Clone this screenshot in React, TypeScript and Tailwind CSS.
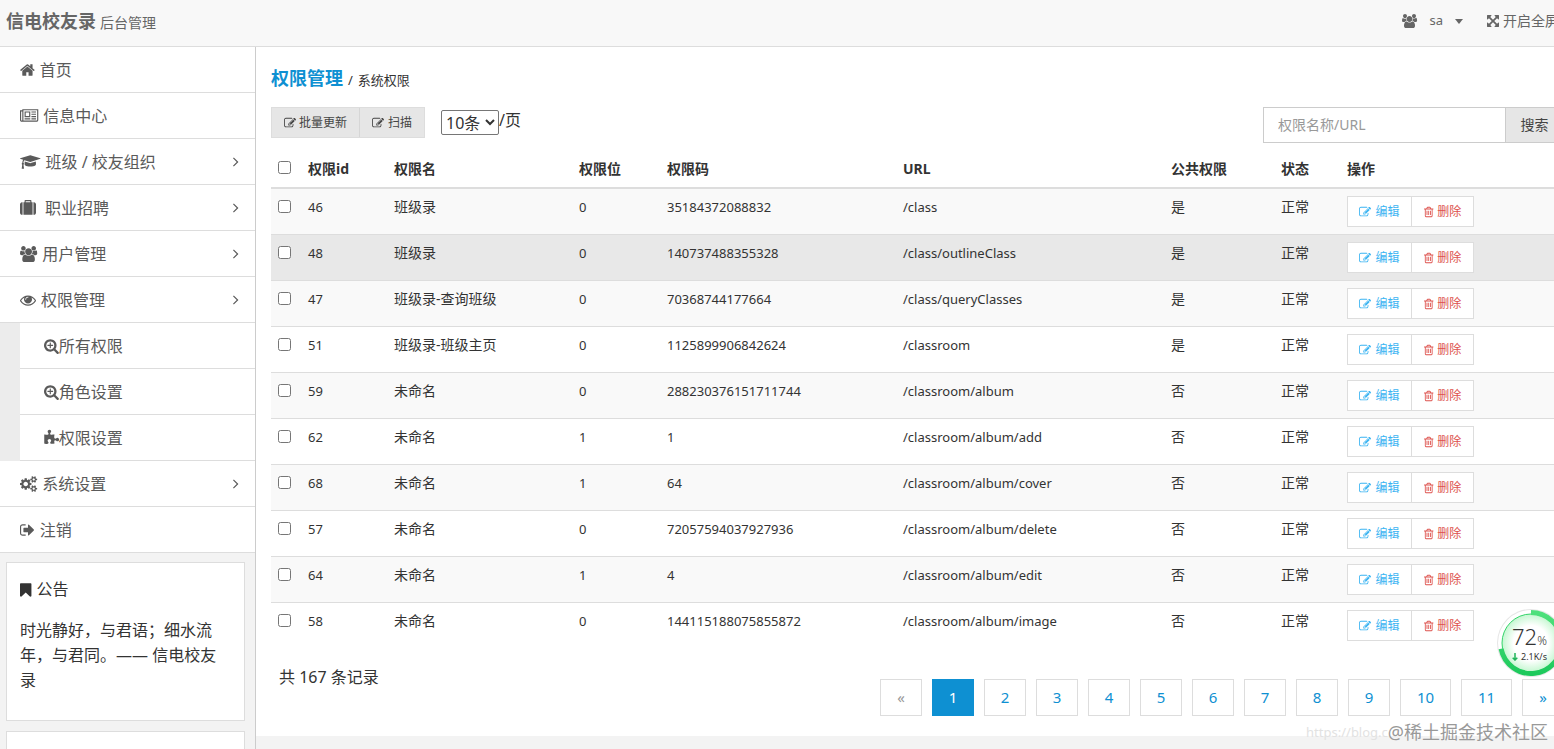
import { useState } from "react";
import type React from "react";

const ICONS = {
  home: {
    box: "64 0 1664 1792",
    d: "M1472 992v480q0 26-19 45t-45 19h-384v-384h-256v384h-384q-26 0-45-19t-19-45v-480q0-1 .5-3t.5-3l575-474 575 474q1 2 1 6zm223-69l-62 74q-8 9-21 11h-3q-13 0-21-7l-692-577-692 577q-12 8-24 7-13-2-21-11l-62-74q-8-10-7-23.5t11-21.5l719-599q32-26 76-26t76 26l244 204v-195q0-14 9-23t23-9h192q14 0 23 9t9 23v408l219 182q10 8 11 21.5t-7 23.5z",
  },
  news: {
    box: "0 0 2048 1792",
    d: "M1024 512h-384v384h384v-384zm128 640v128h-640v-128h640zm0-768v640h-640v-640h640zm640 768v128h-512v-128h512zm0-256v128h-512v-128h512zm0-256v128h-512v-128h512zm0-256v128h-512v-128h512zm-1536 960v-960h-128v960q0 26 19 45t45 19 45-19 19-45zm1664 0v-1088h-1536v1088q0 33-11 64h1483q26 0 45-19t19-45zm128-1216v1216q0 80-56 136t-136 56h-1664q-80 0-136-56t-56-136v-1088h256v-128h1792z",
  },
  graduation: {
    box: "0 0 2304 1792",
    d: "M1774 836l18 316q4 69-82 128t-235 93.5-323 34.5-323-34.5-235-93.5-82-128l18-316 574 181q22 7 48 7t48-7zm530-324q0 23-22 31l-1120 352q-4 1-10 1t-10-1l-652-206q-43 34-71 111.5t-34 178.5q63 36 63 109 0 69-58 107l58 433q2 14-8 25-9 11-24 11h-192q-15 0-24-11-10-11-8-25l58-433q-58-38-58-107 0-73 65-111 11-207 98-330l-333-104q-22-8-22-31t22-31l1120-352q4-1 10-1t10 1l1120 352q22 8 22 31z",
  },
  suitcase: {
    box: "0 0 1792 1792",
    d: "M640 256h512v-128h-512v128zm-352 0v1408h-64q-92 0-158-66t-66-158v-960q0-92 66-158t158-66h64zm1120 0v1408h-1024v-1408h128v-160q0-40 28-68t68-28h576q40 0 68 28t28 68v160h128zm384 224v960q0 92-66 158t-158 66h-64v-1408h64q92 0 158 66t66 158z",
  },
  users: {
    box: "0 0 1920 1792",
    d: "M593 896q-162 5-265 128h-134q-82 0-138-40.5t-56-118.5q0-353 124-353 6 0 43.5 21t97.5 42.5 119 21.5q67 0 133-23-5 37-5 66 0 159 81 256zm1071 637q0 120-73 189.5t-194 69.5h-874q-121 0-194-69.5t-73-189.5q0-53 3.5-103.5t14-109 26.5-108.5 43-97.5 62-81 85.5-53.5 111.5-20q10 0 43 21.5t73 48 107 48 135 21.5 135-21.5 107-48 73-48 43-21.5q61 0 111.5 20t85.5 53.5 62 81 43 97.5 26.5 108.5 14 109 3.5 103.5zm-1024-1277q0 106-75 181t-181 75-181-75-75-181 75-181 181-75 181 75 75 181zm704 384q0 159-112.5 271.5t-271.5 112.5-271.5-112.5-112.5-271.5 112.5-271.5 271.5-112.5 271.5 112.5 112.5 271.5zm576 225q0 78-56 118.5t-138 40.5h-134q-103-123-265-128 93-134 93-293 0-29-5-66 66 23 133 23 59 0 119-21.5t97.5-42.5 43.5-21q124 0 124 353zm-128-609q0 106-75 181t-181 75-181-75-75-181 75-181 181-75 181 75 75 181z",
  },
  eye: {
    box: "0 0 1792 1792",
    d: "M1664 960q-152-236-381-353 61 104 61 225 0 185-131.5 316.5t-316.5 131.5-316.5-131.5-131.5-316.5q0-121 61-225-229 117-381 353 133 205 333.5 326.5t434.5 121.5 434.5-121.5 333.5-326.5zm-720-384q0-20-14-34t-34-14q-125 0-214.5 89.5t-89.5 214.5q0 20 14 34t34 14 34-14 14-34q0-86 61-147t147-61q20 0 34-14t14-34zm848 384q0 34-20 69-140 230-376.5 368.5t-499.5 138.5-499.5-139-376.5-368q-20-35-20-69t20-69q140-229 376.5-368t499.5-139 499.5 139 376.5 368q20 35 20 69z",
  },
  searchPlus: {
    box: "64 0 1664 1792",
    d: "M1088 800v64q0 13-9.5 22.5t-22.5 9.5h-224v224q0 13-9.5 22.5t-22.5 9.5h-64q-13 0-22.5-9.5t-9.5-22.5v-224h-224q-13 0-22.5-9.5t-9.5-22.5v-64q0-13 9.5-22.5t22.5-9.5h224v-224q0-13 9.5-22.5t22.5-9.5h64q13 0 22.5 9.5t9.5 22.5v224h224q13 0 22.5 9.5t9.5 22.5zm128 32q0-185-131.5-316.5t-316.5-131.5-316.5 131.5-131.5 316.5 131.5 316.5 316.5 131.5 316.5-131.5 131.5-316.5zm512 832q0 53-37.5 90.5t-90.5 37.5q-54 0-90-38l-343-342q-179 124-399 124-143 0-273.5-55.5t-225-150-150-225-55.5-273.5 55.5-273.5 150-225 225-150 273.5-55.5 273.5 55.5 225 150 150 225 55.5 273.5q0 220-124 399l343 343q37 37 37 90z",
  },
  puzzle: {
    box: "64 0 1664 1792",
    d: "M1755 1083q0 81-44.5 135t-123.5 54q-41 0-77.5-17.5t-59-38-56.5-38-71-17.5q-110 0-110 124 0 39 16 115t15 115v5q-22 0-33 1-34 3-97.5 11.5t-115.5 13.5-98 5q-61 0-103-26.5t-42-83.5q0-37 17.5-71t38-56.5 38-59 17.5-77.5q0-79-54-123.5t-135-44.5q-84 0-143 45.5t-59 127.5q0 43 15 83t33.5 64.5 33.5 53 15 50.5q0 45-46 89-37 35-117 35-95 0-245-24-9-2-27.5-4t-27.5-4l-13-2q-1 0-3-1-2 0-2-1v-1024q2 1 17.5 3.5t34 5 21.5 3.5q150 24 245 24 80 0 117-35 46-44 46-89 0-22-15-50.5t-33.5-53-33.5-64.5-15-83q0-82 59-127.5t144-45.5q80 0 134 44.5t54 123.5q0 41-17.5 77.5t-38 59-38 56.5-17.5 71q0 57 42 83.5t103 26.5q64 0 180-15t163-17v2q-1 2-3.5 17.5t-5 34-3.5 21.5q-24 150-24 245 0 80 35 117 44 46 89 46 22 0 50.5-15t53-33.5 64.5-33.5 83-15q82 0 127.5 59t45.5 143z",
  },
  cogs: {
    box: "0 0 1920 1792",
    d: "M896 896q0-106-75-181t-181-75-181 75-75 181 75 181 181 75 181-75 75-181zm768 512q0-52-38-90t-90-38-90 38-38 90q0 53 37.5 90.5t90.5 37.5 90.5-37.5 37.5-90.5zm0-1024q0-52-38-90t-90-38-90 38-38 90q0 53 37.5 90.5t90.5 37.5 90.5-37.5 37.5-90.5zm-384 421v185q0 10-7 19.5t-16 10.5l-155 24q-11 35-32 76 34 48 90 115 7 11 7 20 0 12-7 19-23 30-82.5 89.5t-78.5 59.5q-11 0-21-7l-115-90q-37 19-77 31-11 108-23 155-7 24-30 24h-186q-11 0-20-7.5t-10-17.5l-23-153q-34-10-75-31l-118 89q-7 7-20 7-11 0-21-8-144-133-144-160 0-9 7-19 10-14 41-53t47-61q-23-44-35-82l-152-24q-10-1-17-9.5t-7-19.5v-185q0-10 7-19.5t16-10.5l155-24q11-35 32-76-34-48-90-115-7-11-7-20 0-12 7-20 22-30 82-89t79-59q11 0 21 7l115 90q34-18 77-32 11-108 23-154 7-24 30-24h186q11 0 20 7.5t10 17.5l23 153q34 10 75 31l118-89q8-7 20-7 11 0 21 8 144 133 144 160 0 8-7 19-12 16-42 54t-45 60q23 48 34 82l152 23q10 2 17 10.5t7 19.5zm640 533v140q0 16-149 31-12 27-30 52 51 113 51 138 0 4-4 7-122 71-124 71-8 0-46-47t-52-68q-20 2-30 2t-30-2q-14 21-52 68t-46 47q-2 0-124-71-4-3-4-7 0-25 51-138-18-25-30-52-149-15-149-31v-140q0-16 149-31 13-29 30-52-51-113-51-138 0-4 4-7 4-2 35-20t59-34 30-16q8 0 46 46.5t52 67.5q20-2 30-2t30 2q51-71 92-112l6-2q4 0 124 70 4 3 4 7 0 25-51 138 17 23 30 52 149 15 149 31zm0-1024v140q0 16-149 31-12 27-30 52 51 113 51 138 0 4-4 7-122 71-124 71-8 0-46-47t-52-68q-20 2-30 2t-30-2q-14 21-52 68t-46 47q-2 0-124-71-4-3-4-7 0-25 51-138-18-25-30-52-149-15-149-31v-140q0-16 149-31 13-29 30-52-51-113-51-138 0-4 4-7 4-2 35-20t59-34 30-16q8 0 46 46.5t52 67.5q20-2 30-2t30 2q51-71 92-112l6-2q4 0 124 70 4 3 4 7 0 25-51 138 17 23 30 52 149 15 149 31z",
  },
  signOut: {
    box: "64 0 1664 1792",
    d: "M704 1440q0 4 1 20t.5 26.5-3 23.5-10 19.5-20.5 6.5h-320q-119 0-203.5-84.5t-84.5-203.5v-704q0-119 84.5-203.5t203.5-84.5h320q13 0 22.5 9.5t9.5 22.5q0 4 1 20t.5 26.5-3 23.5-10 19.5-20.5 6.5h-320q-66 0-113 47t-47 113v704q0 66 47 113t113 47h312l11.5 1 11.5 3 8 5.5 7 9 2 13.5zm928-544q0 26-19 45l-544 544q-19 19-45 19t-45-19-19-45v-288h-448q-26 0-45-19t-19-45v-384q0-26 19-45t45-19h448v-288q0-26 19-45t45-19 45 19l544 544q19 19 19 45z",
  },
  bookmark: {
    box: "256 0 1280 1792",
    d: "M1420 128q23 0 44 9 33 13 52.5 41t19.5 62v1289q0 34-19.5 62t-52.5 41q-19 8-44 8-48 0-83-32l-441-424-441 424q-36 33-83 33-23 0-44-9-33-13-52.5-41t-19.5-62v-1289q0-34 19.5-62t52.5-41q21-9 44-9h1048z",
  },
  edit: {
    box: "0 0 1792 1792",
    d: "M888 1184l116-116-152-152-116 116v56h96v96h56zm440-720q-16-16-33 1l-350 350q-17 17-1 33t33-1l350-350q17-17 1-33zm80 594v190q0 119-84.5 203.5t-203.5 84.5h-832q-119 0-203.5-84.5t-84.5-203.5v-832q0-119 84.5-203.5t203.5-84.5h832q63 0 117 25 15 7 18 23 3 17-9 29l-49 49q-14 14-32 8-23-6-45-6h-832q-66 0-113 47t-47 113v832q0 66 47 113t113 47h832q66 0 113-47t47-113v-126q0-13 9-22l64-64q15-15 35-7t20 29zm-96-738l288 288-672 672h-288v-288zm444 132l-92 92-288-288 92-92q28-28 68-28t68 28l152 152q28 28 28 68t-28 68z",
  },
  trash: {
    box: "192 0 1408 1792",
    d: "M704 736v576q0 14-9 23t-23 9h-64q-14 0-23-9t-9-23v-576q0-14 9-23t23-9h64q14 0 23 9t9 23zm256 0v576q0 14-9 23t-23 9h-64q-14 0-23-9t-9-23v-576q0-14 9-23t23-9h64q14 0 23 9t9 23zm256 0v576q0 14-9 23t-23 9h-64q-14 0-23-9t-9-23v-576q0-14 9-23t23-9h64q14 0 23 9t9 23zm128 724v-948h-896v948q0 22 7 40.5t14.5 27 10.5 8.5h832q3 0 10.5-8.5t14.5-27 7-40.5zm-672-1076h448l-48-117q-7-9-17-11h-317q-10 2-17 11zm928 32v64q0 14-9 23t-23 9h-96v948q0 83-47 143.5t-113 60.5h-832q-66 0-113-58.5t-47-141.5v-952h-96q-14 0-23-9t-9-23v-64q0-14 9-23t23-9h309l70-167q15-37 54-63t79-26h320q40 0 79 26t54 63l70 167h309q14 0 23 9t9 23z",
  },
  arrows: {
    box: "128 0 1536 1792",
    d: "M1411 541l-355 355 355 355 144-144q29-31 70-14 39 17 39 59v448q0 26-19 45t-45 19h-448q-42 0-59-40-17-39 14-69l144-144-355-355-355 355 144 144q31 30 14 69-17 40-59 40h-448q-26 0-45-19t-19-45v-448q0-42 40-59 39-17 69 14l144 144 355-355-355-355-144 144q-19 19-45 19-12 0-24-5-40-17-40-59v-448q0-26 19-45t45-19h448q42 0 59 40 17 39-14 69l-144 144 355 355 355-355-144-144q-31-30-14-69 17-40 59-40h448q26 0 45 19t19 45v448q0 42-39 59-13 5-25 5-26 0-45-19z",
  },
  angleRight: {
    box: "576 64 640 1792",
    d: "M1171 960q0 13-10 23l-466 466q-10 10-23 10t-23-10l-50-50q-10-10-10-23t10-23l393-393-393-393q-10-10-10-23t10-23l50-50q10-10 23-10t23 10l466 466q10 10 10 23z",
  },
};

type IconName = keyof typeof ICONS;

const Icon = ({ name, className = "" }: { name: IconName; className?: string }) => (
  <svg
    viewBox={ICONS[name].box}
    fill="currentColor"
    aria-hidden="true"
    className={`h-[1em] w-auto shrink-0 overflow-visible ${className}`}
  >
    <path d={ICONS[name].d} />
  </svg>
);

const menu: { icon: IconName; label: string; arrow?: boolean; wide?: boolean; children?: { icon: IconName; label: string }[] }[] = [
  { icon: "home", label: "首页" },
  { icon: "news", label: "信息中心" },
  { icon: "graduation", label: "班级 / 校友组织", arrow: true },
  { icon: "suitcase", label: "职业招聘", arrow: true, wide: true },
  { icon: "users", label: "用户管理", arrow: true },
  {
    icon: "eye",
    label: "权限管理",
    arrow: true,
    children: [
      { icon: "searchPlus", label: "所有权限" },
      { icon: "searchPlus", label: "角色设置" },
      { icon: "puzzle", label: "权限设置" },
    ],
  },
  { icon: "cogs", label: "系统设置", arrow: true },
  { icon: "signOut", label: "注销" },
];

const rows = [
  { id: 46, name: "班级录", pos: 0, code: "35184372088832", url: "/class", open: "是" },
  { id: 48, name: "班级录", pos: 0, code: "140737488355328", url: "/class/outlineClass", open: "是" },
  { id: 47, name: "班级录-查询班级", pos: 0, code: "70368744177664", url: "/class/queryClasses", open: "是" },
  { id: 51, name: "班级录-班级主页", pos: 0, code: "1125899906842624", url: "/classroom", open: "是" },
  { id: 59, name: "未命名", pos: 0, code: "288230376151711744", url: "/classroom/album", open: "否" },
  { id: 62, name: "未命名", pos: 1, code: "1", url: "/classroom/album/add", open: "否" },
  { id: 68, name: "未命名", pos: 1, code: "64", url: "/classroom/album/cover", open: "否" },
  { id: 57, name: "未命名", pos: 0, code: "72057594037927936", url: "/classroom/album/delete", open: "否" },
  { id: 64, name: "未命名", pos: 1, code: "4", url: "/classroom/album/edit", open: "否" },
  { id: 58, name: "未命名", pos: 0, code: "144115188075855872", url: "/classroom/album/image", open: "否" },
];

const pages = ["«", "1", "2", "3", "4", "5", "6", "7", "8", "9", "10", "11", "»"];

const Header = () => (
  <header className="flex h-[47px] items-center justify-between border-b border-[#ddd] bg-[#f8f8f8] pb-1 pl-[6px] text-[#666]">
    <div className="flex items-baseline gap-1">
      <strong className="text-lg font-bold">信电校友录</strong>
      <small className="text-sm">后台管理</small>
    </div>
    <nav className="flex items-center gap-6 pr-5">
      <a href="#user" className="flex items-center text-[13px]">
        <Icon name="users" className="mr-3 text-sm" />
        sa
        <span className="ml-3 border-x-[4px] border-t-[5px] border-x-transparent border-t-current" />
      </a>
      <a href="#fullscreen" className="flex items-center gap-1 text-sm">
        <Icon name="arrows" />
        开启全屏
      </a>
    </nav>
  </header>
);

const Sidebar = () => (
  <aside className="w-64 shrink-0 border-r border-[#ccc] bg-[#f3f3f3]">
    <ul className="bg-[#ececec] text-base text-[#5a5a5a]">
      {menu.map((item) => (
        <li key={item.label}>
          <a
            href="#menu"
            className={`flex h-[46px] items-center border-b border-[#ddd] bg-white pr-4 pl-5 ${item.wide ? "gap-[9px]" : "gap-[5px]"}`}
          >
            <Icon name={item.icon} />
            <span>{item.label}</span>
            {item.arrow && <Icon name="angleRight" className="ml-auto" />}
          </a>
          {item.children && (
            <ul className="pl-5">
              {item.children.map((child) => (
                <li key={child.label}>
                  <a href="#menu" className="flex h-[46px] items-center border-b border-[#ddd] bg-white pl-6">
                    <Icon name={child.icon} />
                    {child.label}
                  </a>
                </li>
              ))}
            </ul>
          )}
        </li>
      ))}
    </ul>

    <section className="mt-[9px] mr-[10px] ml-[6px] border border-[#ddd] bg-white px-[13px] pt-[14px] pb-[27px] text-base leading-[25px] text-[#333]">
      <h2 className="flex items-center gap-[5px]">
        <Icon name="bookmark" />
        公告
      </h2>
      <p className="mt-4 pr-3">时光静好，与君语；细水流年，与君同。—— 信电校友录</p>
    </section>
    <section className="mt-[10px] mr-[10px] ml-[6px] h-40 border border-[#ddd] bg-white" />
  </aside>
);

const Toolbar = () => {
  const [keyword, setKeyword] = useState("");

  const handleSearch = (e: React.FormEvent<HTMLFormElement>) => {
    e.preventDefault();
  };

  return (
    <div className="mt-[13px] flex items-start">
      <div className="flex h-[31px] border border-[#ddd] bg-[#e6e6e6] text-xs text-[#444]">
        <button type="button" className="flex items-center gap-[3px] border-r border-[#d6d6d6] px-3">
          <Icon name="edit" />
          批量更新
        </button>
        <button type="button" className="flex items-center gap-1 px-3">
          <Icon name="edit" />
          扫描
        </button>
      </div>

      <label className="mt-[3px] ml-4 flex items-start text-base leading-5 text-[#333]">
        <select
          defaultValue="10"
          className="h-[25px] w-[58px] rounded-[2px] border border-[#767676] bg-white text-base text-[#333]"
        >
          <option value="10">10条</option>
          <option value="20">20条</option>
        </select>
        /页
      </label>

      <form onSubmit={handleSearch} className="ml-auto flex h-9 text-sm">
        <input
          type="text"
          aria-label="权限名称/URL"
          placeholder="权限名称/URL"
          value={keyword}
          onChange={(e) => setKeyword(e.target.value)}
          className="w-[242px] border border-r-0 border-[#ccc] px-[14px] placeholder:text-[#999] focus:outline-none"
        />
        <button type="submit" className="w-[59px] border border-[#ccc] bg-[#e6e6e6] text-[#444]">
          搜索
        </button>
      </form>
    </div>
  );
};

const PermissionTable = () => (
  <table className="mt-2 w-full table-fixed border-separate border-spacing-0 text-left text-sm leading-[22px] text-[#333]">
    <colgroup>
      <col className="w-[30px]" />
      <col className="w-[86px]" />
      <col className="w-[185px]" />
      <col className="w-[88px]" />
      <col className="w-[236px]" />
      <col />
      <col className="w-[110px]" />
      <col className="w-[66px]" />
      <col className="w-[224px]" />
    </colgroup>
    <thead>
      <tr className="[&>th]:border-b-2 [&>th]:border-[#ddd] [&>th]:p-[7px] [&>th]:font-bold">
        <th>
          <input type="checkbox" aria-label="全选" className="mb-1 block size-[13px]" />
        </th>
        <th>权限id</th>
        <th>权限名</th>
        <th>权限位</th>
        <th>权限码</th>
        <th>URL</th>
        <th>公共权限</th>
        <th>状态</th>
        <th>操作</th>
      </tr>
    </thead>
    <tbody>
      {rows.map((row) => (
        <tr
          key={row.id}
          className={`[&>td]:border-[#ddd] [&>td]:p-[7px] [&>td]:align-top [&:not(:first-child)>td]:border-t ${
            row.id === 48 ? "bg-[#e8e8e8]" : "odd:bg-[#f9f9f9]"
          }`}
        >
          <td>
            <input type="checkbox" aria-label={`${row.id}`} className="mt-1 block size-[13px]" />
          </td>
          <td className="text-[13px]">{row.id}</td>
          <td>{row.name}</td>
          <td className="text-[13px]">{row.pos}</td>
          <td className="text-[13px]">{row.code}</td>
          <td className="text-[13px]">{row.url}</td>
          <td>{row.open}</td>
          <td>正常</td>
          <td>
            <div className="flex h-[31px] w-[127px] border border-[#ddd] bg-white text-xs">
              <button type="button" className="flex w-16 items-center justify-center gap-1 border-r border-[#ddd] text-[#3bb4f2]">
                <Icon name="edit" />
                编辑
              </button>
              <button type="button" className="flex flex-1 items-center justify-center gap-1 text-[#dd514c]">
                <Icon name="trash" />
                删除
              </button>
            </div>
          </td>
        </tr>
      ))}
    </tbody>
  </table>
);

const Pagination = () => (
  <div className="flex items-start justify-between">
    <p className="mt-4 ml-2 text-base leading-[26px] text-[#333]">共 167 条记录</p>
    <ul className="mt-[31px] flex gap-[10px] text-[15px]">
      {pages.map((page) => (
        <li key={page}>
          <a
            href="#page"
            className={`flex h-[37px] items-center justify-center border ${page.length > 1 ? "w-[51px]" : "w-[42px]"} ${
              page === "1"
                ? "border-[#0e90d2] bg-[#0e90d2] text-white"
                : page === "«"
                  ? "border-[#ddd] text-[#999]"
                  : "border-[#ddd] text-[#0e90d2]"
            }`}
          >
            {page}
          </a>
        </li>
      ))}
    </ul>
  </div>
);

const SpeedBall = () => (
  <div className="absolute top-[609px] -right-[11px] size-[68px]">
    <svg viewBox="0 0 68 68" className="absolute inset-0 size-full overflow-visible" aria-hidden="true">
      <defs>
        <radialGradient id="ball">
          <stop offset="60%" stopColor="#ffffff" />
          <stop offset="100%" stopColor="#c4f7d0" />
        </radialGradient>
        <linearGradient id="ring" x1="0" y1="0" x2="0" y2="1">
          <stop offset="0%" stopColor="#4fe07c" />
          <stop offset="100%" stopColor="#1dc95c" />
        </linearGradient>
      </defs>
      <circle cx="34" cy="34" r="34" fill="#000000" opacity="0.1" />
      <circle cx="34" cy="34" r="33" fill="#ffffff" />
      <circle cx="34" cy="34" r="29" fill="url(#ball)" stroke="#35d46b" strokeWidth="1" />
      <path d="M34 3.5a30.5 30.5 0 1 1-29.94 36.32" fill="none" stroke="url(#ring)" strokeWidth="5" />
    </svg>
    <div className="relative flex flex-col pt-[15px] pl-[15px] text-[#333]">
      <span className="text-[22px] leading-6 font-light">
        72<span className="text-xs">%</span>
      </span>
      <span className="flex items-center gap-[3px] text-[9px] leading-4">
        <svg viewBox="0 0 6 8" className="h-2 w-[6px]" fill="none" stroke="#1fb45a" strokeWidth="1.5" aria-hidden="true">
          <path d="M3 0v7M.7 4.7L3 7l2.300-2.300" />
        </svg>
        2.1K/s
      </span>
    </div>
  </div>
);

export default function App() {
  return (
    <div className="relative h-screen overflow-hidden bg-[#f3f3f3] font-['Noto_Sans','Noto_Sans_CJK_SC',sans-serif]">
      {/* the admin layout is a little wider than the viewport */}
      <div className="flex h-full w-[calc(100%+25px)] flex-col">
        <Header />
        <div className="flex min-h-0 flex-1">
          <Sidebar />
          <div className="min-w-0 flex-1">
            <main className="bg-white px-[15px] pt-[18px] pb-5">
              <h1 className="flex items-baseline gap-[5px] text-[13px] leading-[27px] text-[#333]">
                <strong className="text-lg leading-[27px] font-bold text-[#0e90d2]">权限管理</strong>
                <span>/</span>
                <small className="text-[13px]">系统权限</small>
              </h1>
              <Toolbar />
              <PermissionTable />
              <Pagination />
            </main>
          </div>
        </div>
      </div>

      <SpeedBall />
      <div className="pointer-events-none absolute right-[6px] bottom-[3px] flex items-center leading-6">
        <span className="text-[13px] text-[#e2e2e2]">https://blog.c</span>
        <span className="text-lg text-[#999]">@稀土掘金技术社区</span>
      </div>
    </div>
  );
}
